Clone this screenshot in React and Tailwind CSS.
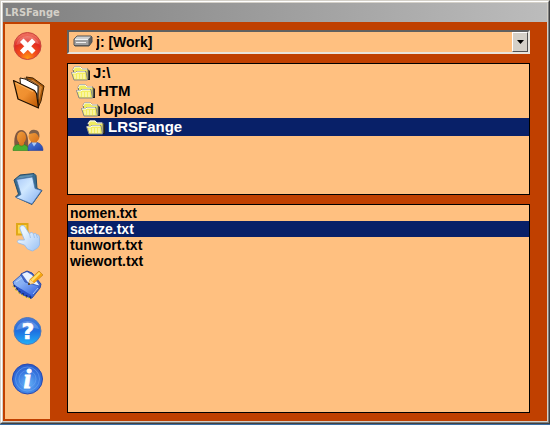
import { useState } from "react";

const folders = ["J:\\", "HTM", "Upload", "LRSFange"];
const files = ["nomen.txt", "saetze.txt", "tunwort.txt", "wiewort.txt"];

// Each directory level sits a little further to the right
const indents = ["pl-[3px]", "pl-2", "pl-[13px]", "pl-[18px]"];

const CloseIcon = () => (
  <svg viewBox="0 0 40 40" className="size-10">
    <defs>
      <radialGradient id="closeFill" cx="0.5" cy="0.95" r="0.85">
        <stop offset="0" stopColor="#ff9a10" />
        <stop offset="0.35" stopColor="#f4511c" />
        <stop offset="0.75" stopColor="#e02a22" />
        <stop offset="1" stopColor="#ee6a5a" />
      </radialGradient>
    </defs>
    <circle cx="19.500" cy="21" r="13.5" fill="url(#closeFill)" stroke="#c8443c" />
    <path d="M8 20a12 12 0 0 1 23-1q-11-3-23 1z" fill="#fff" opacity="0.2" />
    <path d="M15.5 17l8.500 8.500M24 17l-8.500 8.500" stroke="#fff" strokeWidth="5" strokeLinecap="square" />
  </svg>
);

const OpenIcon = () => (
  <svg viewBox="0 0 40 40" className="size-10">
    <defs>
      <linearGradient id="openFill" x1="0" y1="0" x2="1" y2="1">
        <stop offset="0" stopColor="#f09838" />
        <stop offset="0.5" stopColor="#f09030" />
        <stop offset="1" stopColor="#b85400" />
      </linearGradient>
    </defs>
    <path d="M18 4l7 1 11 8-3 15-3 7-4-16z" fill="#a85808" stroke="#402000" />
    <path d="M19 7l6 0 9 7-3 13z" fill="#d88838" />
    <path d="M12 5l5 1 13 7 0 20-17-14z" fill="#fff" stroke="#201408" />
    <path d="M16 5l6 2 9 6-2 12" fill="none" stroke="#504030" strokeWidth="0.800" />
    <path d="M5.500 7.500l21 10 2 3 2 14.500-20.500-9z" fill="url(#openFill)" stroke="#201000" strokeWidth="1.200" strokeLinejoin="round" />
    <path d="M8 10l17 8.500" stroke="#ffc070" strokeWidth="0.800" />
  </svg>
);

const UsersIcon = () => (
  <svg viewBox="0 0 40 40" className="size-10">
    <defs>
      <linearGradient id="skin" x1="0" y1="0" x2="1" y2="1">
        <stop offset="0" stopColor="#f0a040" />
        <stop offset="1" stopColor="#d87018" />
      </linearGradient>
      <linearGradient id="blueShirt" x1="0" y1="0" x2="1" y2="1">
        <stop offset="0" stopColor="#5080e0" />
        <stop offset="1" stopColor="#2040a8" />
      </linearGradient>
    </defs>
    <path d="M7 27c-2-8 0-18 6-18s8 8 7 18z" fill="#805840" />
    <path d="M11 19h5v7h-5z" fill="#d87820" />
    <ellipse cx="13.500" cy="16.500" rx="4.500" ry="6" fill="url(#skin)" />
    <path d="M5 29.500c0-4 2-6 6-6 1 2 4 2 5 0 3 1 5 3 5 6z" fill="#48b030" stroke="#288020" strokeWidth="0.600" />
    <path d="M23 18h6v5h-6z" fill="#d07020" />
    <path d="M20 29.500c0-5 1-7 4-8l2 3 3-3c4 1 6 4 6 8z" fill="url(#blueShirt)" stroke="#284098" strokeWidth="0.600" />
    <path d="M23.500 21.500l2.500 4 3-4-1 0h-3z" fill="#a8c8f8" />
    <circle cx="26" cy="15.500" r="5.500" fill="url(#skin)" />
    <path d="M21 13c0-3 3-5 6-4 4 0 5 4 4 8-1-3-2-5-5-5z" fill="#806048" />
  </svg>
);

const SaveIcon = () => (
  <svg viewBox="0 0 40 40" className="size-10">
    <defs>
      <linearGradient id="arrowFill" x1="0" y1="0" x2="1" y2="1">
        <stop offset="0" stopColor="#a8c8f8" />
        <stop offset="0.4" stopColor="#d0e8ff" />
        <stop offset="1" stopColor="#80acf0" />
      </linearGradient>
    </defs>
    <path d="M6 11l6-5 14-1.500 2 2 1 13 5 2-10 14L7.500 28l3-3z" fill="#386c90" stroke="#284c68" strokeLinejoin="round" />
    <path d="M8 10l4-3 13-1.500-1 2z" fill="#6090b0" />
    <path d="M8.500 10.500L24.500 8 27 19.500l6.500 2L24 35 8 28.500l5-3z" fill="url(#arrowFill)" stroke="#4870a8" strokeWidth="0.700" strokeLinejoin="round" />
  </svg>
);

const SelectIcon = () => (
  <svg viewBox="0 0 40 40" className="size-10">
    <defs>
      <linearGradient id="handFill" x1="0" y1="0" x2="1" y2="1">
        <stop offset="0.3" stopColor="#e8f4ff" />
        <stop offset="1" stopColor="#98c0f4" />
      </linearGradient>
    </defs>
    <rect x="9" y="7" width="10.500" height="10.500" fill="#ffd850" stroke="#e0a818" strokeWidth="2" />
    <path
      d="M12 12c-1-3 3-5 5-2l4.500 7c1-2 3-2 4 0 1-1 3-1 3 1 2-1 3 1 3 3v7l-2 3-5 3-5-2-3-4-6-2c-2-1-1-3 1-3h5z"
      fill="url(#handFill)"
      stroke="#90b8e8"
      strokeWidth="0.800"
      strokeLinejoin="round"
    />
    <path d="M21.500 17l1 4M25.500 17l1 4M28.500 18l1 3" stroke="#98bce8" strokeWidth="0.800" />
  </svg>
);

const EditIcon = () => (
  <svg viewBox="0 0 40 40" className="size-10">
    <defs>
      <linearGradient id="bookFill" x1="0" y1="0" x2="0.800" y2="1">
        <stop offset="0" stopColor="#90b8f0" />
        <stop offset="0.4" stopColor="#88b0f4" />
        <stop offset="1" stopColor="#3060e0" />
      </linearGradient>
    </defs>
    <path d="M13 9l6-3 5 2 9 11-1 4-8 10-10-12z" fill="#4468c8" stroke="#2848a8" strokeLinejoin="round" />
    <path d="M14 9l5-2 5 3 7 10-4 7z" fill="#e8f2ff" />
    <path d="M5 17l8-7 4 7 14 4-7 11.500L6 20z" fill="url(#bookFill)" stroke="#3860c0" strokeLinejoin="round" />
    <path d="M8 17l6-4M25 29l5-6" stroke="#c8dcff" strokeWidth="0.800" />
    <path d="M6 20l4 6 4 4 5 2 5 2-1-4-8-5z" fill="#2850c8" />
    <path d="M5.500 20.500l5 6 7 4.500 6 2" fill="none" stroke="#182c70" strokeWidth="2.400" strokeDasharray="2 2" />
    <path d="M5 21.500l5 6 7 4.500 6 2" fill="none" stroke="#f0d840" strokeWidth="1.500" strokeDasharray="1.500 2.500" />
    <path d="M20.500 19.500l1.500-5L31 6l4 4-9 8z" fill="#f8a810" stroke="#c07810" strokeWidth="0.600" />
    <path d="M23 14.500L31 7l1.500 1.500-8 8z" fill="#ffe068" />
    <path d="M20.500 19.500l1.500-5 4 3.500z" fill="#f8d898" />
    <circle cx="21" cy="19" r="0.900" fill="#302010" />
  </svg>
);

const HelpIcon = () => (
  <svg viewBox="0 0 40 40" className="size-10">
    <defs>
      <linearGradient id="helpFill" x1="0" y1="0" x2="0" y2="1">
        <stop offset="0" stopColor="#4878d8" />
        <stop offset="0.5" stopColor="#2070e0" />
        <stop offset="1" stopColor="#20b0f8" />
      </linearGradient>
    </defs>
    <circle cx="19.500" cy="18" r="13.500" fill="url(#helpFill)" stroke="#5078b8" />
    <path d="M8 17a12 12 0 0 1 23-1q-11-3-23 1z" fill="#fff" opacity="0.2" />
    <text x="20" y="26" textAnchor="middle" fill="#fff" stroke="#fff" strokeWidth="0.600" className="font-['DejaVu_Sans'] text-[22px] font-bold">?</text>
  </svg>
);

const InfoIcon = () => (
  <svg viewBox="0 0 40 40" className="size-10">
    <defs>
      <radialGradient id="infoFill" cx="0.5" cy="0.65" r="0.65">
        <stop offset="0" stopColor="#68b4f8" />
        <stop offset="0.6" stopColor="#3878e0" />
        <stop offset="1" stopColor="#2858c8" />
      </radialGradient>
    </defs>
    <circle cx="19.500" cy="18" r="15" fill="url(#infoFill)" stroke="#2848b0" />
    <circle cx="19.500" cy="18" r="12" fill="none" stroke="#78b0f8" opacity="0.5" />
    <circle cx="19.500" cy="18" r="8.500" fill="none" stroke="#78b0f8" opacity="0.4" />
    <text x="19.500" y="27" textAnchor="middle" fill="#fff" stroke="#fff" strokeWidth="0.800" className="font-['Liberation_Serif'] text-[28px] font-bold italic">i</text>
  </svg>
);

const DriveIcon = () => (
  <svg viewBox="0 0 20 12" className="h-3 w-5">
    <path d="M1 4l3-3h14l1 1v5l-3 4H2l-1-1z" fill="#606060" stroke="#505050" strokeLinejoin="round" />
    <path d="M1.500 4L4 1.500h14L15.500 4z" fill="#d0d0d0" />
    <rect x="1.500" y="4" width="14" height="6" fill="#a0a0a0" />
    <path d="M2 4.500h13M3 7.500h10" stroke="#f0f0f0" />
  </svg>
);

const FolderIcon = () => (
  <svg viewBox="0 0 20 16" className="h-4 w-5 shrink-0">
    <path d="M5 5h13l1 1v9H7z" fill="#202020" />
    <path d="M2 4l2-2.500h5L11 4h6v10H4z" fill="#f0ec60" stroke="#707070" />
    <path d="M2 5l2-3h5l2 2h5" fill="none" stroke="#f8f8f8" />
    <path d="M0.500 7.500h4l1.500-1h9l1.500 8.500H3z" fill="#f4ee60" stroke="#888" />
    <path d="M1 8h4l1-1h8" fill="none" stroke="#fff" />
    <path d="M4 9.500v4M7 9v5M10 9v5M13 9v5" stroke="#fffce0" />
  </svg>
);

const tools = [
  { label: "Close", Icon: CloseIcon },
  { label: "Open", Icon: OpenIcon },
  { label: "Users", Icon: UsersIcon },
  { label: "Save", Icon: SaveIcon },
  { label: "Select", Icon: SelectIcon },
  { label: "Edit", Icon: EditIcon },
  { label: "Help", Icon: HelpIcon },
  { label: "Info", Icon: InfoIcon },
];

const DriveSelect = () => (
  <div className="relative h-6 border-2 border-t-[#606060] border-l-[#606060] border-r-[#e8e4dc] border-b-[#e8e4dc] bg-[#ffc080]">
    <select
      aria-label="Drive"
      className="block h-full w-full appearance-none bg-transparent pl-[27px] text-[14px] leading-5 font-bold text-black outline-none"
    >
      <option>j: [Work]</option>
    </select>
    <span className="pointer-events-none absolute top-[3px] left-1">
      <DriveIcon />
    </span>
    <span className="pointer-events-none absolute top-0 right-0 flex h-full w-4 items-center justify-center border border-t-white border-l-white border-r-[#505050] border-b-[#505050] bg-[#d4d0c8]">
      <svg viewBox="0 0 7 4" className="h-1 w-[7px]">
        <path d="M0 0h7L3.500 4z" fill="#000" />
      </svg>
    </span>
  </div>
);

const App = () => {
  const [folder, setFolder] = useState("LRSFange");
  const [file, setFile] = useState("saetze.txt");

  return (
    <div className="flex min-h-screen flex-col border-b border-[#3a6ea5] font-['Liberation_Sans',sans-serif]">
      <div className="flex flex-1 flex-col border border-t-[#d4d0c8] border-l-[#d4d0c8] border-r-[#404040] border-b-[#404040]">
        <div className="flex flex-1 flex-col border border-t-white border-l-white border-r-[#808080] border-b-[#808080]">
          <div className="flex flex-1 flex-col border border-[#d4d0c8]">
            <header className="flex h-[19px] shrink-0 items-center bg-linear-to-r from-[#808080] to-[#bcbcbc] px-[2px]">
              <h1 className="font-['DejaVu_Sans_Condensed','DejaVu_Sans',sans-serif] text-[11px] leading-4 font-bold text-[#d4d0c8]">
                LRSFange
              </h1>
            </header>

            <div className="flex flex-1 bg-[#c04000] p-[2px]">
              {/* Toolbar */}
              <nav className="flex w-[45px] shrink-0 flex-col items-center gap-2 bg-[#ffc080] pt-px">
                {tools.map(({ label, Icon }) => (
                  <button key={label} aria-label={label} className="size-10 shrink-0">
                    <Icon />
                  </button>
                ))}
              </nav>

              <main className="flex min-w-0 flex-1 flex-col pt-[6px] pr-[15px] pb-[6px] pl-[17px]">
                <DriveSelect />

                {/* Directory tree */}
                <ul className="mt-[9px] min-h-[132px] border border-black bg-[#ffc080]">
                  {folders.map((name, i) => (
                    <li key={name}>
                      <button
                        onClick={() => setFolder(name)}
                        className={`flex h-[18px] w-full items-center gap-[2px] text-left text-[15px] leading-[18px] font-bold ${indents[i]} ${
                          folder === name ? "bg-[#082068] text-white" : "text-black"
                        }`}
                      >
                        <FolderIcon />
                        {name}
                      </button>
                    </li>
                  ))}
                </ul>

                {/* Files in the open directory */}
                <ul className="mt-[9px] flex-1 border border-black bg-[#ffc080]">
                  {files.map((name) => (
                    <li key={name}>
                      <button
                        onClick={() => setFile(name)}
                        className={`block h-4 w-full pl-[2px] text-left text-[14px] leading-4 font-bold ${
                          file === name ? "bg-[#082068] text-white" : "text-black"
                        }`}
                      >
                        {name}
                      </button>
                    </li>
                  ))}
                </ul>
              </main>
            </div>
          </div>
        </div>
      </div>
    </div>
  );
};

export default App;
